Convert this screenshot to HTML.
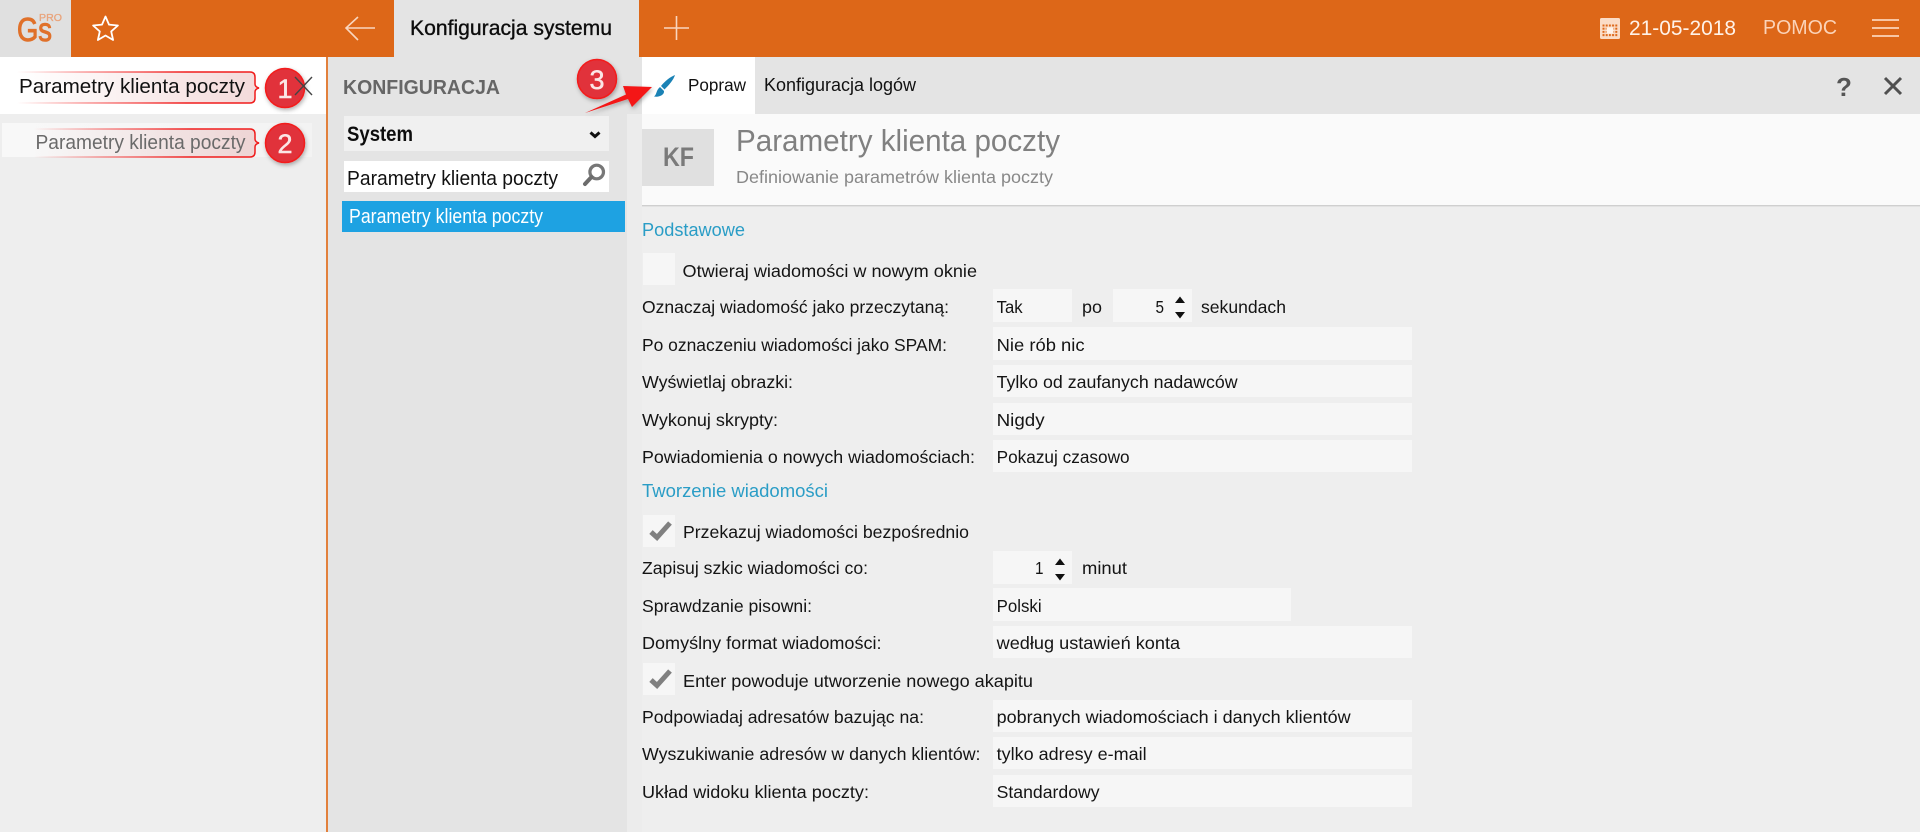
<!DOCTYPE html>
<html lang="pl">
<head>
<meta charset="utf-8">
<title>Konfiguracja systemu</title>
<style>
html,body{margin:0;padding:0;width:1920px;height:832px;overflow:hidden;background:#eee}
svg{display:block}
text{font-family:"Liberation Sans",Arial,sans-serif;font-size:17.6px;fill:#141414}
.v{fill:#f6f6f6}
.sec{fill:#2a9dc6;font-size:18.5px}
.num{fill:#fbe6e6;stroke:#fbe6e6;stroke-width:.5;font-size:27px;text-anchor:middle}
</style>
</head>
<body>
<svg xmlns="http://www.w3.org/2000/svg" width="1920" height="832" viewBox="0 0 1920 832">
<defs>
<linearGradient id="cf" x1="0" x2="1" y1="0" y2="0"><stop offset="0" stop-color="#e8b4b4" stop-opacity="0"/><stop offset=".35" stop-color="#e8b4b4" stop-opacity=".15"/><stop offset="1" stop-color="#e8b4b4" stop-opacity=".5"/></linearGradient>
<linearGradient id="cs" gradientUnits="objectBoundingBox" x1="0" x2="1" y1="0" y2="0"><stop offset="0" stop-color="#f43030" stop-opacity="0"/><stop offset=".3" stop-color="#f43030" stop-opacity=".5"/><stop offset=".7" stop-color="#f01c1c"/><stop offset="1" stop-color="#f01c1c"/></linearGradient>
<linearGradient id="li" x1="0" x2="1" y1="0" y2="0"><stop offset="0" stop-color="#f8f8f8"/><stop offset="1" stop-color="#f3f3f3"/></linearGradient>
<filter id="sh" x="-30%" y="-30%" width="160%" height="160%"><feDropShadow dx="1" dy="2" stdDeviation="2" flood-color="#000" flood-opacity=".3"/></filter>
<pattern id="cal" x="1602.5" y="24.5" width="3.2" height="3.2" patternUnits="userSpaceOnUse"><rect width="2" height="2" fill="#dd6718"/></pattern>
</defs>

<!-- backgrounds -->
<rect width="1920" height="832" fill="#eeeeee"/>
<rect x="0" y="0" width="1920" height="57" fill="#dd6718"/>
<rect x="0" y="0" width="71" height="57" fill="#e0e0e0"/>
<rect x="394" y="0" width="245" height="57" fill="#e4e4e4"/>

<!-- left search -->
<rect x="0" y="57" width="326" height="57" fill="#ffffff"/>
<rect x="2" y="123" width="310" height="34" fill="url(#li)"/>
<rect x="326" y="57" width="2" height="775" fill="#e2803c"/>

<!-- middle column -->
<rect x="328" y="57" width="299" height="775" fill="#e4e4e4"/>
<rect x="627" y="57" width="1293" height="57" fill="#e4e4e4"/>
<rect x="627" y="114" width="15" height="718" fill="#ececec"/>
<rect x="344" y="116" width="265" height="35" fill="#f0f0f0"/>
<rect x="344" y="161" width="265" height="31" fill="#ffffff"/>
<rect x="342" y="201" width="283" height="31" fill="#1ea2e2"/>

<!-- tab bar / header -->
<rect x="642" y="57" width="113" height="57" fill="#ffffff"/>
<rect x="642" y="114" width="1278" height="91" fill="#fafafa"/>
<rect x="642" y="205" width="1278" height="1" fill="#cfcfcf"/>
<rect x="642" y="206" width="1278" height="1" fill="#e2e2e2"/>
<rect x="642" y="129" width="72" height="57" fill="#e0e0e0"/>

<!-- top bar content -->
<text x="17" y="41" style="font-size:33px;fill:#e0712a;stroke:#e0712a;stroke-width:1" textLength="35" lengthAdjust="spacingAndGlyphs">Gs</text>
<text x="39" y="21" style="font-size:10px;fill:#e9a47c;stroke:#e9a47c;stroke-width:.3" textLength="23" lengthAdjust="spacingAndGlyphs">PRO</text>
<path d="M105.5 16.5L109 24.6 117.9 25.5 111.2 31.4 113.1 40 105.5 35.5 97.9 40 99.8 31.4 93.1 25.5 102 24.6Z" fill="none" stroke="#fff" stroke-width="1.8" stroke-linejoin="round"/>
<path d="M375 28H346M358 17L346 28 358 40" fill="none" stroke="#f9d6bf" stroke-width="1.6"/>
<text x="410" y="35" style="font-size:21.5px;fill:#0c0c0c;stroke:#0c0c0c;stroke-width:.35" textLength="202" lengthAdjust="spacingAndGlyphs">Konfiguracja systemu</text>
<path d="M664 28H689M676.500 16V40" fill="none" stroke="#f9d6bf" stroke-width="1.6"/>
<rect x="1600" y="18" width="20" height="21" rx="1.500" fill="#fbdcc6"/>
<rect x="1602" y="24" width="16" height="13" fill="url(#cal)"/>
<rect x="1606.500" y="27.500" width="7" height="6" fill="#fff3ea"/>
<text x="1629" y="35" style="font-size:21px;fill:#fff2e8" textLength="107" lengthAdjust="spacingAndGlyphs">21-05-2018</text>
<text x="1763" y="34" style="font-size:20px;fill:#fbd3b8" textLength="74" lengthAdjust="spacingAndGlyphs">POMOC</text>
<path d="M1872 20H1899M1872 28H1899M1872 36H1899" fill="none" stroke="#fbd3b8" stroke-width="1.800"/>

<!-- left panel text & callouts -->
<path d="M17 72H250Q255 72 255 77V84Q255 87 259 88 255 89 255 92V98Q255 103 250 103H17Z" fill="url(#cf)"/>
<path d="M17 72H250Q255 72 255 77V84Q255 87 259 88 255 89 255 92V98Q255 103 250 103H17" fill="none" stroke="url(#cs)" stroke-width="1.500"/>
<text x="19" y="93" style="font-size:20.500px;fill:#111" textLength="226" lengthAdjust="spacingAndGlyphs">Parametry klienta poczty</text>
<path d="M34 129H250Q255 129 255 134V139Q255 142 259 143 255 144 255 147V152Q255 157 250 157H34Z" fill="url(#cf)"/>
<path d="M34 129H250Q255 129 255 134V139Q255 142 259 143 255 144 255 147V152Q255 157 250 157H34" fill="none" stroke="url(#cs)" stroke-width="1.500"/>
<text x="35.500" y="149" style="font-size:20px;fill:#6a6a6a" textLength="210" lengthAdjust="spacingAndGlyphs">Parametry klienta poczty</text>

<circle cx="285" cy="88" r="19.500" fill="#e1333a" stroke="#f31a1a" stroke-width="1.500" filter="url(#sh)"/>
<text class="num" x="285" y="98">1</text>
<path d="M295 77L312 95M312 77L295 95" stroke="#444" stroke-width="1.400" fill="none"/>
<circle cx="285" cy="143" r="19.500" fill="#e1333a" stroke="#f31a1a" stroke-width="1.500" filter="url(#sh)"/>
<text class="num" x="285" y="153">2</text>

<!-- middle column text -->
<text x="343" y="94" style="font-size:20.500px;font-weight:bold;fill:#666" textLength="157" lengthAdjust="spacingAndGlyphs">KONFIGURACJA</text>
<text x="347" y="141" style="font-size:21px;font-weight:bold;fill:#0d0d0d" textLength="66" lengthAdjust="spacingAndGlyphs">System</text>
<path d="M590.500 132.500L595 136.500 599.500 132.500" fill="none" stroke="#111" stroke-width="3"/>
<text x="347" y="185" style="font-size:20.500px;fill:#111" textLength="211" lengthAdjust="spacingAndGlyphs">Parametry klienta poczty</text>
<circle cx="596.700" cy="172" r="6.800" fill="none" stroke="#777" stroke-width="3.200"/>
<path d="M591.500 177L585 184" stroke="#6c6c6c" stroke-width="4" stroke-linecap="round"/>
<text x="349" y="223" style="font-size:20px;fill:#fff" textLength="194" lengthAdjust="spacingAndGlyphs">Parametry klienta poczty</text>

<!-- tab bar content -->
<path d="M675 75C673.500 80 668.500 85.500 664.500 89.500L661 86C665 81 670 77 675 75Z" fill="#1a82b5"/>
<path d="M660 87L664 91C664.500 95 659 97.500 654 96.500 657 94.500 656 90 660 87Z" fill="#1a82b5"/>
<text x="688" y="91" style="font-size:17.600px;fill:#111" textLength="58" lengthAdjust="spacingAndGlyphs">Popraw</text>
<text x="764" y="91" style="font-size:18px;fill:#111" textLength="152" lengthAdjust="spacingAndGlyphs">Konfiguracja logów</text>
<text x="1836" y="96" style="font-size:26px;font-weight:bold;fill:#555">?</text>
<path d="M1885 78L1901 94M1901 78L1885 94" stroke="#505050" stroke-width="3" fill="none"/>

<!-- red arrow + marker 3 -->
<polygon points="585,113 626,94.500 623,86 652,87 632,107 628,99" fill="#f41414" filter="url(#sh)"/>
<circle cx="597" cy="79" r="19.500" fill="#e1333a" stroke="#f31a1a" stroke-width="1.500" filter="url(#sh)"/>
<text class="num" x="597" y="89">3</text>

<!-- header text -->
<text x="663" y="166" style="font-size:27px;font-weight:bold;fill:#7a7a7a" textLength="31" lengthAdjust="spacingAndGlyphs">KF</text>
<text x="736" y="151" style="font-size:31px;fill:#808080" textLength="324" lengthAdjust="spacingAndGlyphs">Parametry klienta poczty</text>
<text x="736" y="183" style="font-size:17.600px;fill:#888" textLength="317" lengthAdjust="spacingAndGlyphs">Definiowanie parametrów klienta poczty</text>

<!-- form -->
<text class="sec" x="642" y="236" textLength="103" lengthAdjust="spacingAndGlyphs">Podstawowe</text>
<rect class="v" x="643" y="253" width="32" height="32"/>
<text x="682.500" y="277" textLength="294.500" lengthAdjust="spacingAndGlyphs">Otwieraj wiadomości w nowym oknie</text>

<text x="642" y="313" textLength="307" lengthAdjust="spacingAndGlyphs">Oznaczaj wiadomość jako przeczytaną:</text>
<rect class="v" x="993" y="289" width="79" height="33"/>
<text x="996.600" y="313" textLength="26" lengthAdjust="spacingAndGlyphs">Tak</text>
<text x="1082" y="313" textLength="20" lengthAdjust="spacingAndGlyphs">po</text>
<rect class="v" x="1113" y="289" width="79" height="33"/>
<text x="1155.500" y="313" textLength="8.500" lengthAdjust="spacingAndGlyphs">5</text>
<path d="M1175 303L1180 296.500 1185 303ZM1175 312L1180 318.500 1185 312Z" fill="#111"/>
<text x="1201" y="313" textLength="85" lengthAdjust="spacingAndGlyphs">sekundach</text>

<text x="642" y="351" textLength="305" lengthAdjust="spacingAndGlyphs">Po oznaczeniu wiadomości jako SPAM:</text>
<rect class="v" x="993" y="327" width="419" height="33"/>
<text x="996.600" y="351" textLength="88" lengthAdjust="spacingAndGlyphs">Nie rób nic</text>

<text x="642" y="388" textLength="151" lengthAdjust="spacingAndGlyphs">Wyświetlaj obrazki:</text>
<rect class="v" x="993" y="365" width="419" height="32"/>
<text x="996.600" y="388" textLength="241" lengthAdjust="spacingAndGlyphs">Tylko od zaufanych nadawców</text>

<text x="642" y="426" textLength="136" lengthAdjust="spacingAndGlyphs">Wykonuj skrypty:</text>
<rect class="v" x="993" y="403" width="419" height="32"/>
<text x="996.600" y="426" textLength="48" lengthAdjust="spacingAndGlyphs">Nigdy</text>

<text x="642" y="463" textLength="333" lengthAdjust="spacingAndGlyphs">Powiadomienia o nowych wiadomościach:</text>
<rect class="v" x="993" y="440" width="419" height="32"/>
<text x="996.600" y="463" textLength="133" lengthAdjust="spacingAndGlyphs">Pokazuj czasowo</text>

<text class="sec" x="642" y="497" textLength="186" lengthAdjust="spacingAndGlyphs">Tworzenie wiadomości</text>

<rect class="v" x="643" y="515" width="32" height="32"/>
<path d="M651 532L657 537.500 670 523" fill="none" stroke="#808080" stroke-width="5"/>
<text x="683" y="538" textLength="286" lengthAdjust="spacingAndGlyphs">Przekazuj wiadomości bezpośrednio</text>

<text x="642" y="574" textLength="226" lengthAdjust="spacingAndGlyphs">Zapisuj szkic wiadomości co:</text>
<rect class="v" x="993" y="551" width="79" height="33"/>
<text x="1035" y="574" textLength="8.500" lengthAdjust="spacingAndGlyphs">1</text>
<path d="M1055 565L1060 558.500 1065 565ZM1055 574L1060 580.500 1065 574Z" fill="#111"/>
<text x="1082" y="574" textLength="45" lengthAdjust="spacingAndGlyphs">minut</text>

<text x="642" y="612" textLength="170" lengthAdjust="spacingAndGlyphs">Sprawdzanie pisowni:</text>
<rect class="v" x="993" y="588" width="298" height="33"/>
<text x="996.600" y="612" textLength="45" lengthAdjust="spacingAndGlyphs">Polski</text>

<text x="642" y="649" textLength="239.500" lengthAdjust="spacingAndGlyphs">Domyślny format wiadomości:</text>
<rect class="v" x="993" y="626" width="419" height="32"/>
<text x="996.600" y="649" textLength="183.500" lengthAdjust="spacingAndGlyphs">według ustawień konta</text>

<rect class="v" x="643" y="663" width="32" height="32"/>
<path d="M651 680L657 685.500 670 671" fill="none" stroke="#808080" stroke-width="5"/>
<text x="683" y="687" textLength="350" lengthAdjust="spacingAndGlyphs">Enter powoduje utworzenie nowego akapitu</text>

<text x="642" y="723" textLength="282" lengthAdjust="spacingAndGlyphs">Podpowiadaj adresatów bazując na:</text>
<rect class="v" x="993" y="700" width="419" height="32"/>
<text x="996.600" y="723" textLength="354" lengthAdjust="spacingAndGlyphs">pobranych wiadomościach i danych klientów</text>

<text x="642" y="760" textLength="338.500" lengthAdjust="spacingAndGlyphs">Wyszukiwanie adresów w danych klientów:</text>
<rect class="v" x="993" y="737" width="419" height="32"/>
<text x="996.600" y="760" textLength="150" lengthAdjust="spacingAndGlyphs">tylko adresy e-mail</text>

<text x="642" y="798" textLength="227" lengthAdjust="spacingAndGlyphs">Układ widoku klienta poczty:</text>
<rect class="v" x="993" y="775" width="419" height="32"/>
<text x="996.600" y="798" textLength="103" lengthAdjust="spacingAndGlyphs">Standardowy</text>
</svg>
</body>
</html>
